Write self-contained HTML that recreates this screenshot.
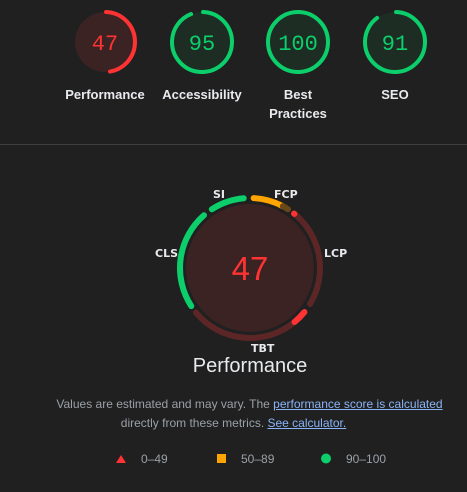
<!DOCTYPE html>
<html><head><style>
body{margin:0;width:467px;height:492px;background:#202020;font-family:"Liberation Sans",sans-serif;position:relative;overflow:hidden;color:#e8eaed}
.a{position:absolute;white-space:nowrap}
.lbl{font-size:13px;font-weight:bold;color:#e8eaed;text-align:center;width:100px;line-height:19px}
.m{font-size:11px;font-weight:bold;color:#e8eaed;font-family:"DejaVu Sans",sans-serif}
.t{font-size:12px;color:#9aa0a6;text-align:center;width:467px;left:0}
a{color:#8ab4f8;text-decoration:underline}
</style></head><body>
<svg class="a" style="left:0;top:0" width="467" height="492">
<g fill="none" stroke-width="4" stroke-linecap="round">
 <circle cx="105" cy="42" r="30" fill="#3a2322" stroke="none"/>
 <circle cx="105" cy="42" r="30" stroke="#ff3333" stroke-dasharray="88 200" transform="rotate(-88 105 42)"/>
 <circle cx="202" cy="42" r="30" fill="#1d2d23" stroke="#0cce6b" stroke-dasharray="176 200" transform="rotate(-88 202 42)"/>
 <circle cx="298" cy="42" r="30" fill="#1d2d23" stroke="#0cce6b"/>
 <circle cx="395" cy="42" r="30" fill="#1d2d23" stroke="#0cce6b" stroke-dasharray="168 200" transform="rotate(-88 395 42)"/>
</g>
<text x="105" y="50" fill="#ff3333" font-size="22" text-anchor="middle" font-family="Liberation Mono,monospace">47</text>
<text x="202" y="50" fill="#0cce6b" font-size="22" text-anchor="middle" font-family="Liberation Mono,monospace">95</text>
<text x="298" y="50" fill="#0cce6b" font-size="22" text-anchor="middle" font-family="Liberation Mono,monospace">100</text>
<text x="395" y="50" fill="#0cce6b" font-size="22" text-anchor="middle" font-family="Liberation Mono,monospace">91</text>
<line x1="0" y1="144.5" x2="467" y2="144.5" stroke="#3c4043"/>
<circle cx="250" cy="268" r="64" fill="#3a2322"/>
<g fill="none" stroke-width="6" stroke-linecap="round">
 <circle cx="250" cy="268" r="70" stroke="#ffa400" stroke-dasharray="30.5 500" transform="rotate(-87 250 268)"/>
 <circle cx="250" cy="268" r="70" stroke="#6a4718" stroke-dasharray="6 500" transform="rotate(-62 250 268)"/>
 <circle cx="250" cy="268" r="70" stroke="#5c2626" stroke-dasharray="100 500" transform="rotate(-51 250 268)"/>
 <circle cx="250" cy="268" r="70" stroke="#ff3333" stroke-dasharray="0.5 500" transform="rotate(-51 250 268)"/>
 <circle cx="250" cy="268" r="70" stroke="#5c2626" stroke-dasharray="124 500" transform="rotate(39 250 268)"/>
 <circle cx="250" cy="268" r="70" stroke="#ff3333" stroke-dasharray="14 500" transform="rotate(39 250 268)"/>
 <circle cx="250" cy="268" r="70" stroke="#0cce6b" stroke-dasharray="100 500" transform="rotate(147 250 268)"/>
 <circle cx="250" cy="268" r="70" stroke="#0cce6b" stroke-dasharray="34 500" transform="rotate(237 250 268)"/>
</g>
<text x="250" y="280" fill="#ff3333" font-size="33" text-anchor="middle">47</text>
<path d="M121 455 L126 463 L116 463Z" fill="#ff3333"/>
<rect x="217" y="454" width="9" height="9" fill="#ffa400"/>
<circle cx="326" cy="458.5" r="5" fill="#0cce6b"/>
</svg>
<div class="a lbl" style="left:55px;top:85px">Performance</div>
<div class="a lbl" style="left:152px;top:85px">Accessibility</div>
<div class="a lbl" style="left:248px;top:85px">Best<br>Practices</div>
<div class="a lbl" style="left:345px;top:85px">SEO</div>
<div class="a m" style="left:213px;top:188px">SI</div>
<div class="a m" style="left:274px;top:188px">FCP</div>
<div class="a m" style="left:324px;top:247px">LCP</div>
<div class="a m" style="left:155px;top:247px">CLS</div>
<div class="a m" style="left:251px;top:342px">TBT</div>
<div class="a" style="left:0;width:500px;text-align:center;top:355px;font-size:20px;color:#e8eaed">Performance</div>
<div class="a t" style="top:397px;left:16px">Values are estimated and may vary. The <a>performance score is calculated</a></div>
<div class="a t" style="top:416px;">directly from these metrics. <a>See calculator.</a></div>
<div class="a" style="left:141px;top:452px;font-size:12px;color:#9aa0a6">0–49</div>
<div class="a" style="left:241px;top:452px;font-size:12px;color:#9aa0a6">50–89</div>
<div class="a" style="left:346px;top:452px;font-size:12px;color:#9aa0a6">90–100</div>
</body></html>
